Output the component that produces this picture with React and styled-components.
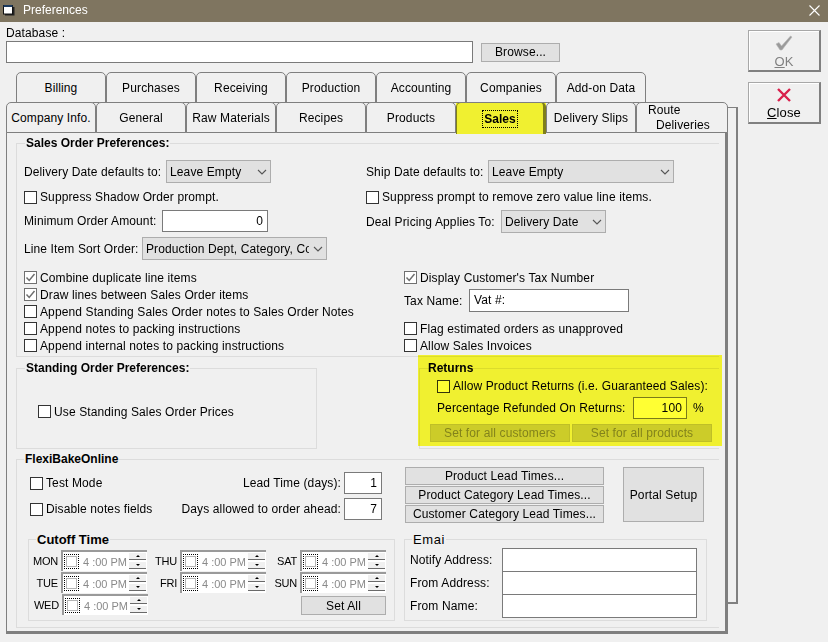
import React from "react";
import styled, {createGlobalStyle} from "styled-components";

const GlobalStyle = createGlobalStyle`
  html, body {
    margin: 0;
    padding: 0;
    background: #f0f0f0;
  }
  * {
    box-sizing: border-box;
  }
`

const Window = styled.div`
  width: 828px;
  height: 642px;
  overflow: hidden;
  background: #f0f0f0;
  color: #000;
  font-family: "Liberation Sans", Arial, sans-serif;
  font-size: 12px;
  letter-spacing: 0.12px;
`

const TitleBar = styled.div`
  height: 22px;
  background: #7f7560;
  color: #fff;
  display: flex;
  align-items: center;
  padding: 0 8px 2px 3px;
  gap: 8px;
  font-size: 12px;
  letter-spacing: 0;
`

const TitleText = styled.div`
  flex: 1;
`

const Body = styled.div`
  display: flex;
`

const Main = styled.div`
  width: 738px;
  padding: 5px 0 0 6px;
`

const Side = styled.div`
  margin-left: 10px;
  padding-top: 8px;
  display: flex;
  flex-direction: column;
  gap: 10px;
`

const BigButton = styled.div`
  width: 73px;
  height: 42px;
  border: 1px solid #a8a8a8;
  border-right: 2px solid #808080;
  border-bottom: 2px solid #808080;
  box-shadow: inset 1px 1px 0 #fff;
  padding-top: 3px;
  display: flex;
  flex-direction: column;
  align-items: center;
  justify-content: center;
  gap: 3px;
  font-size: 13px;
  color: ${props => props.$disabled ? '#808080' : '#000'};
`

const DbLabel = styled.div`
  height: 14px;
  line-height: 13px;
`

const DbRow = styled.div`
  display: flex;
  align-items: center;
  gap: 8px;
  height: 22px;
  margin-bottom: 9px;
`

const TextInput = styled.div`
  width: ${props => props.$w}px;
  height: ${props => props.$h || 22}px;
  flex: none;
  background: #fff;
  border: 1px solid #7a7a7a;
  text-align: ${props => props.$left ? 'left' : 'right'};
  padding: 0 4px;
  line-height: ${props => (props.$h || 22) - 2}px;
`

const Button = styled.div`
  width: ${props => props.$w}px;
  height: ${props => props.$h || 18}px;
  flex: none;
  background: ${props => props.$disabled ? '#cccccc' : '#e1e1e1'};
  border: 1px solid ${props => props.$disabled ? '#bfbfbf' : '#adadad'};
  color: ${props => props.$disabled ? '#838383' : '#000'};
  display: flex;
  align-items: center;
  justify-content: center;
  white-space: nowrap;
`

const Sheets = styled.div`
  display: flex;
  align-items: flex-start;
`

const FrontSheet = styled.div`
  width: 722px;
`

const BackStrip = styled.div`
  width: 10px;
  height: 497px;
  margin-top: 35px;
  border: 2px solid #808080;
  border-left: none;
  border-top-width: 1px;
`

const TabRow = styled.div`
  display: flex;
  height: 30px;
  padding-left: ${props => props.$indent || 0}px;
`

const Tab = styled.div`
  position: relative;
  width: ${props => props.$w || 90}px;
  height: ${props => props.$active ? 32 : 31}px;
  flex: none;
  border: 1px solid #7f7f7f;
  border-bottom: ${props => props.$active ? 'none' : '1px solid #7f7f7f'};
  border-right-width: ${props => props.$active ? 3 : 1}px;
  border-radius: 5px 5px 0 0;
  background: #f0f0f0;
  padding-top: 1px;
  z-index: ${props => props.$active ? 2 : 1};
  display: flex;
  align-items: center;
  justify-content: center;
  white-space: nowrap;
`

const TabHighlight = styled.div`
  position: absolute;
  inset: 0 -3px 0 -1px;
  background: #ffff33;
  mix-blend-mode: multiply;
`

const FocusLabel = styled.div`
  border: 1px dotted #000;
  padding: 1px 1px;
  font-weight: bold;
  letter-spacing: 0;
  line-height: 14px;
`

const TwoLines = styled.div`
  width: 100%;
  padding-left: 11px;
  line-height: 15px;
`

const SecondLine = styled.div`
  padding-left: 8px;
`

const Panel = styled.div`
  position: relative;
  height: 502px;
  border: 1px solid #7f7f7f;
  border-right: 3px solid #7f7f7f;
  border-bottom: 3px solid #7f7f7f;
  padding: 10px 0 0 9px;
`

const Group = styled.div`
  position: relative;
  width: ${props => props.$w}px;
  height: ${props => props.$h}px;
  flex: none;
  margin-top: ${props => props.$top || 0}px;
  margin-left: ${props => props.$left || 0}px;
  border: 1px solid #dcdcdc;
  border-right: ${props => props.$open ? 'none' : '1px solid #dcdcdc'};
`

const Legend = styled.div`
  position: absolute;
  left: ${props => props.$x || 8}px;
  top: -8px;
  padding: 0 1px;
  height: 15px;
  line-height: 15px;
  font-weight: ${props => props.$plain ? 'normal' : 'bold'};
  font-size: ${props => props.$big ? 13 : 12}px;
  letter-spacing: ${props => props.$plain ? 0.6 : 0}px;
  background: ${props => props.$clear ? 'transparent' : '#f0f0f0'};
  white-space: nowrap;
`

const SalesColumns = styled.div`
  display: grid;
  grid-template-columns: 342px 1fr;
  padding: 16px 0 0 7px;
`

const Stack = styled.div`
  display: flex;
  flex-direction: column;
`

const Field = styled.div`
  display: flex;
  align-items: center;
  height: ${props => props.$h || 17}px;
  margin-top: ${props => props.$top || 0}px;
  padding-left: ${props => props.$indent || 0}px;
  white-space: nowrap;
`

const FieldLabel = styled.div`
  width: ${props => props.$w}px;
  flex: none;
`

const Select = styled.div`
  width: ${props => props.$w}px;
  height: 23px;
  flex: none;
  display: flex;
  align-items: center;
  background: #e1e1e1;
  border: 1px solid #adadad;
  padding: 0 3px 0 3px;
`

const SelectValue = styled.div`
  flex: 1;
  overflow: hidden;
  white-space: nowrap;
  margin-right: 4px;
`

const CheckBox = styled.div`
  width: 13px;
  height: 13px;
  flex: none;
  margin-right: 3px;
  border: 1px solid ${props => props.$on ? '#707070' : '#333'};
  background: #fff;
  display: flex;
  align-items: center;
  justify-content: center;
`

const MiddleRow = styled.div`
  display: flex;
  align-items: flex-start;
`

const CenteredCheck = styled.div`
  height: 100%;
  display: flex;
  align-items: center;
  padding: 6px 0 0 21px;
`

const ReturnsBody = styled.div`
  padding: 10px 0 0 17px;
`

const ReturnsButtons = styled.div`
  display: flex;
  gap: 2px;
  margin: 5px 0 0 -7px;
`

const Percent = styled.div`
  margin-left: 6px;
`

const Highlight = styled.div`
  position: absolute;
  left: -2px;
  top: -14px;
  width: 304px;
  height: 91px;
  background: #ffff33;
  mix-blend-mode: multiply;
  pointer-events: none;
`

const OnlineTop = styled.div`
  display: flex;
  align-items: flex-start;
  padding: 7px 0 0 13px;
`

const OnlineFields = styled.div`
  width: 352px;
  padding-top: 5px;
  display: flex;
  flex-direction: column;
  gap: 4px;
`

const OnlineRow = styled.div`
  display: flex;
  align-items: center;
  height: 22px;
`

const Spacer = styled.div`
  flex: 1;
`

const LeadLabel = styled.div`
  margin-right: 3px;
`

const LeadButtons = styled.div`
  margin-left: 23px;
  display: flex;
  flex-direction: column;
  gap: 1px;
`

const PortalSlot = styled.div`
  margin-left: 19px;
`

const OnlineBottom = styled.div`
  display: flex;
  gap: 9px;
  padding: 16px 0 0 11px;
`

const DayGrid = styled.div`
  display: grid;
  grid-template-columns: 118px 119px 120px;
  grid-auto-rows: 21px;
  row-gap: 1px;
  padding: 10px 0 0 0;
`

const DayField = styled.div`
  display: flex;
  align-items: center;
  justify-content: flex-end;
  gap: 3px;
  margin-right: ${props => props.$nudge ? -1 : 0}px;
`

const DayName = styled.div`
  font-size: 11px;
  letter-spacing: -0.2px;
`

const SetAllSlot = styled.div`
  display: flex;
  justify-content: flex-end;
  padding-top: 2px;
`

const TimePicker = styled.div`
  width: 86px;
  height: 21px;
  flex: none;
  display: flex;
  align-items: center;
  background: #fff;
  border-top: 2px solid #9a9a9a;
  border-left: 2px solid #9a9a9a;
  padding: 0 1px 0 1px;
  color: #8a8a8a;
`

const PickerCheck = styled.div`
  width: 15px;
  height: 15px;
  flex: none;
  border: 1px dotted #000;
  padding: 1px;
  margin-right: 4px;
`

const PickerBox = styled.div`
  height: 100%;
  border: 1px solid #b4b4b4;
`

const PickerTime = styled.div`
  flex: 1;
  white-space: nowrap;
  font-size: 11px;
  letter-spacing: 0;
`

const Spinner = styled.div`
  width: 17px;
  height: 19px;
  flex: none;
  display: flex;
  flex-direction: column;
  gap: 1px;
`

const SpinButton = styled.div`
  height: 8px;
  background: #f0f0f0;
  border-bottom: 1px solid #6a6a6a;
  border-top: 1px solid #fff;
  display: flex;
  align-items: center;
  justify-content: center;
`

const Arrow = styled.div`
  width: 0;
  height: 0;
  border-left: 2px solid transparent;
  border-right: 2px solid transparent;
  border-top: ${props => props.$up ? 'none' : '2px solid #000'};
  border-bottom: ${props => props.$up ? '2px solid #000' : 'none'};
`

const EmailBody = styled.div`
  padding: 8px 0 0 5px;
`

const EmailRow = styled.div`
  display: flex;
  align-items: center;
  margin-bottom: -1px;
`

const EmailLabel = styled.div`
  width: 92px;
  flex: none;
`

const Check = () => (
    <svg width="11" height="11" viewBox="0 0 11 11">
        <path d="M1.5 5.5 L4.2 8.4 L9.5 2" fill="none" stroke="#6e6e6e" strokeWidth="1.5"/>
    </svg>
)

const Chevron = () => (
    <svg width="10" height="6" viewBox="0 0 10 6">
        <path d="M1 1 L5 5 L9 1" fill="none" stroke="#555" strokeWidth="1.1"/>
    </svg>
)

const WindowIcon = () => (
    <svg width="12" height="12" viewBox="0 0 12 12">
        <rect x="2" y="3" width="9.5" height="8.5" fill="#222"/>
        <rect x="0.5" y="1.5" width="9" height="8.5" fill="#fff" stroke="#111" strokeWidth="1"/>
        <rect x="0.5" y="1" width="9" height="2" fill="#1c3a5e"/>
    </svg>
)

const CloseX = () => (
    <svg width="11" height="11" viewBox="0 0 11 11">
        <path d="M0.5 0.5 L10.5 10.5 M10.5 0.5 L0.5 10.5" stroke="#fff" strokeWidth="1.1"/>
    </svg>
)

const OkIcon = () => (
    <svg width="18" height="16" viewBox="0 0 18 16">
        <path d="M1 9 L4 7.5 L6.5 11 L15.5 1 L17 2 L7 15 L5 15 Z" fill="#9a9a9a" stroke="#b8b8b8" strokeWidth="0.6"/>
    </svg>
)

const RedX = () => (
    <svg width="14" height="14" viewBox="0 0 14 14">
        <path d="M1 1 L13 13 M13 1 L1 13" stroke="#d9204c" strokeWidth="2.4"/>
    </svg>
)

const CheckRow = ({label, on, indent, top, h}) => (
    <Field $indent={indent} $top={top} $h={h}>
        <CheckBox $on={on}>{on && <Check/>}</CheckBox>
        {label}
    </Field>
)

const TimeField = ({day, nudge}) => (
    <DayField $nudge={nudge}>
        <DayName>{day}</DayName>
        <TimePicker>
            <PickerCheck><PickerBox/></PickerCheck>
            <PickerTime>4 :00 PM</PickerTime>
            <Spinner>
                <SpinButton><Arrow $up/></SpinButton>
                <SpinButton><Arrow/></SpinButton>
            </Spinner>
        </TimePicker>
    </DayField>
)

const topTabs = ['Billing', 'Purchases', 'Receiving', 'Production', 'Accounting', 'Companies', 'Add-on Data'];
const lowerTabs = ['Company Info.', 'General', 'Raw Materials', 'Recipes', 'Products'];

export default function App() {
    return (
        <Window>
            <GlobalStyle/>
            <TitleBar>
                <WindowIcon/>
                <TitleText>Preferences</TitleText>
                <CloseX/>
            </TitleBar>
            <Body>
                <Main>
                    <DbLabel>Database :</DbLabel>
                    <DbRow>
                        <TextInput $w={467}/>
                        <Button $w={79} $h={19}>Browse...</Button>
                    </DbRow>
                    <Sheets>
                        <FrontSheet>
                            <TabRow $indent={10}>
                                {topTabs.map(it => <Tab key={it}>{it}</Tab>)}
                            </TabRow>
                            <TabRow>
                                {lowerTabs.map(it => <Tab key={it}>{it}</Tab>)}
                                <Tab $active>
                                    <FocusLabel>Sales</FocusLabel>
                                    <TabHighlight/>
                                </Tab>
                                <Tab>Delivery Slips</Tab>
                                <Tab $w={92}>
                                    <TwoLines>
                                        Route
                                        <SecondLine>Deliveries</SecondLine>
                                    </TwoLines>
                                </Tab>
                            </TabRow>
                            <Panel>
                                <Group $w={703} $h={214} $open>
                                    <Legend>Sales Order Preferences:</Legend>
                                    <SalesColumns>
                                        <Stack>
                                            <Field $h={23}>
                                                <FieldLabel $w={142}>Delivery Date defaults to:</FieldLabel>
                                                <Select $w={105}><SelectValue>Leave Empty</SelectValue><Chevron/></Select>
                                            </Field>
                                            <CheckRow label="Suppress Shadow Order prompt." h={14} top={7}/>
                                            <Field $h={22} $top={6}>
                                                <FieldLabel $w={138}>Minimum Order Amount:</FieldLabel>
                                                <TextInput $w={106}>0</TextInput>
                                            </Field>
                                            <Field $h={23} $top={5}>
                                                <FieldLabel $w={118}>Line Item Sort Order:</FieldLabel>
                                                <Select $w={185}><SelectValue>Production Dept, Category, Code</SelectValue><Chevron/></Select>
                                            </Field>
                                            <CheckRow label="Combine duplicate line items" on top={9}/>
                                            <CheckRow label="Draw lines between Sales Order items" on/>
                                            <CheckRow label="Append Standing Sales Order notes to Sales Order Notes"/>
                                            <CheckRow label="Append notes to packing instructions"/>
                                            <CheckRow label="Append internal notes to packing instructions"/>
                                        </Stack>
                                        <Stack>
                                            <Field $h={23}>
                                                <FieldLabel $w={122}>Ship Date defaults to:</FieldLabel>
                                                <Select $w={186}><SelectValue>Leave Empty</SelectValue><Chevron/></Select>
                                            </Field>
                                            <CheckRow label="Suppress prompt to remove zero value line items." h={14} top={7}/>
                                            <Field $h={23} $top={6}>
                                                <FieldLabel $w={135}>Deal Pricing Applies To:</FieldLabel>
                                                <Select $w={105}><SelectValue>Delivery Date</SelectValue><Chevron/></Select>
                                            </Field>
                                            <CheckRow label="Display Customer's Tax Number" on indent={38} top={36}/>
                                            <Field $h={23} $top={3} $indent={38}>
                                                <FieldLabel $w={65}>Tax Name:</FieldLabel>
                                                <TextInput $w={160} $h={23} $left>Vat #:</TextInput>
                                            </Field>
                                            <CheckRow label="Flag estimated orders as unapproved" indent={38} top={8}/>
                                            <CheckRow label="Allow Sales Invoices" indent={38}/>
                                        </Stack>
                                    </SalesColumns>
                                </Group>
                                <MiddleRow>
                                    <Group $w={301} $h={81} $top={11}>
                                        <Legend>Standing Order Preferences:</Legend>
                                        <CenteredCheck>
                                            <CheckRow label="Use Standing Sales Order Prices"/>
                                        </CenteredCheck>
                                    </Group>
                                    <Group $w={300} $h={81} $top={11} $left={102} $open>
                                        <Legend $clear $x={7}>Returns</Legend>
                                        <ReturnsBody>
                                            <CheckRow label="Allow Product Returns (i.e. Guaranteed Sales):" h={14}/>
                                            <Field $h={22} $top={4}>
                                                <FieldLabel $w={196}>Percentage Refunded On Returns:</FieldLabel>
                                                <TextInput $w={54}>100</TextInput>
                                                <Percent>%</Percent>
                                            </Field>
                                            <ReturnsButtons>
                                                <Button $w={140} $disabled>Set for all customers</Button>
                                                <Button $w={140} $disabled>Set for all products</Button>
                                            </ReturnsButtons>
                                        </ReturnsBody>
                                        <Highlight/>
                                    </Group>
                                </MiddleRow>
                                <Group $w={703} $h={169} $top={10} $open>
                                    <Legend $x={7}>FlexiBakeOnline</Legend>
                                    <OnlineTop>
                                        <OnlineFields>
                                            <OnlineRow>
                                                <CheckBox/>Test Mode
                                                <Spacer/>
                                                <LeadLabel>Lead Time (days):</LeadLabel>
                                                <TextInput $w={38}>1</TextInput>
                                            </OnlineRow>
                                            <OnlineRow>
                                                <CheckBox/>Disable notes fields
                                                <Spacer/>
                                                <LeadLabel>Days allowed to order ahead:</LeadLabel>
                                                <TextInput $w={38}>7</TextInput>
                                            </OnlineRow>
                                        </OnlineFields>
                                        <LeadButtons>
                                            <Button $w={199}>Product Lead Times...</Button>
                                            <Button $w={199}>Product Category Lead Times...</Button>
                                            <Button $w={199}>Customer Category Lead Times...</Button>
                                        </LeadButtons>
                                        <PortalSlot>
                                            <Button $w={81} $h={55}>Portal Setup</Button>
                                        </PortalSlot>
                                    </OnlineTop>
                                    <OnlineBottom>
                                        <Group $w={367} $h={82}>
                                            <Legend $big $x={7}>Cutoff Time</Legend>
                                            <DayGrid>
                                                <TimeField day="MON"/>
                                                <TimeField day="THU"/>
                                                <TimeField day="SAT"/>
                                                <TimeField day="TUE"/>
                                                <TimeField day="FRI"/>
                                                <TimeField day="SUN"/>
                                                <TimeField day="WED" nudge/>
                                                <div/>
                                                <SetAllSlot><Button $w={85} $h={19}>Set All</Button></SetAllSlot>
                                            </DayGrid>
                                        </Group>
                                        <Group $w={303} $h={82}>
                                            <Legend $big $plain $x={7}>Emai</Legend>
                                            <EmailBody>
                                                <EmailRow><EmailLabel>Notify Address:</EmailLabel><TextInput $w={195} $h={24}/></EmailRow>
                                                <EmailRow><EmailLabel>From Address:</EmailLabel><TextInput $w={195} $h={24}/></EmailRow>
                                                <EmailRow><EmailLabel>From Name:</EmailLabel><TextInput $w={195} $h={24}/></EmailRow>
                                            </EmailBody>
                                        </Group>
                                    </OnlineBottom>
                                </Group>
                            </Panel>
                        </FrontSheet>
                        <BackStrip/>
                    </Sheets>
                </Main>
                <Side>
                    <BigButton $disabled>
                        <OkIcon/>
                        <div><u>O</u>K</div>
                    </BigButton>
                    <BigButton>
                        <RedX/>
                        <div><u>C</u>lose</div>
                    </BigButton>
                </Side>
            </Body>
        </Window>
    )
}
